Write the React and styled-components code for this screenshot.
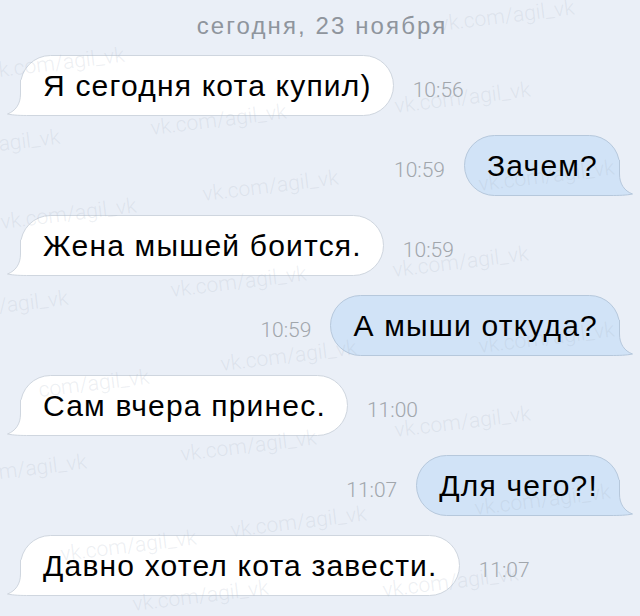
import React from 'react'
import styled, { createGlobalStyle } from 'styled-components'

const GlobalStyle = createGlobalStyle`
  html, body {
    margin: 0;
    padding: 0;
    background: #eaeff7;
  }
  body {
    font-family: "Liberation Sans", Arial, sans-serif;
  }
`

const messages = [
  { out: false, text: 'Я сегодня кота купил)', time: '10:56' },
  { out: true, text: 'Зачем?', time: '10:59' },
  { out: false, text: 'Жена мышей боится.', time: '10:59' },
  { out: true, text: 'А мыши откуда?', time: '10:59' },
  { out: false, text: 'Сам вчера принес.', time: '11:00' },
  { out: true, text: 'Для чего?!', time: '11:07' },
  { out: false, text: 'Давно хотел кота завести.', time: '11:07' },
]

// faint watermark stamps over the screenshot
const marks = [
  [440, 12, 'vk.com/agil_vk'], [0, 58, 'k.com/agil_vk'], [396, 94, 'vk.com/agil_vk'],
  [152, 116, 'vk.com/agil_vk'], [0, 132, 'agil_vk'], [480, 172, 'vk.com/agil_vk'],
  [204, 182, 'vk.com/agil_vk'], [2, 210, 'vk.com/agil_vk'], [394, 258, 'vk.com/agil_vk'],
  [172, 278, 'vk.com/agil_vk'], [0, 294, '/agil_vk'], [480, 334, 'vk.com/agil_vk'],
  [222, 352, 'vk.com/agil_vk'], [40, 378, 'com/agil_vk'], [396, 418, 'vk.com/agil_vk'],
  [182, 442, 'vk.com/agil_vk'], [0, 460, 'm/agil_vk'], [476, 496, 'vk.com/agil_vk'],
  [232, 518, 'vk.com/agil_vk'], [62, 542, 'vk.com/agil_vk'], [384, 578, 'vk.com/agil_vk'],
  [134, 592, 'vk.com/agil_vk'],
]

export default function App() {
  return (
    <Screen>
      <GlobalStyle />
      <DateLabel>сегодня, 23 ноября</DateLabel>
      <List>
        {messages.map((m, i) => (
          <Row key={i} out={m.out}>
            <Bubble out={m.out}>
              <Tail out={m.out} viewBox="0 0 50 36" width="50" height="36">
                <path
                  d="M14.5 0 L14.5 14 C14.5 24 9.5 31 1.5 34 C8 35.3 14 35.5 24 35.5 L50 35.5 L50 0 Z"
                  className="fill"
                />
                <path
                  d="M14.5 0 L14.5 14 C14.5 24 9.5 31 1.5 34 C8 35.3 14 35.5 24 35.5 L50 35.5"
                  className="line"
                />
              </Tail>
              <BubbleText>{m.text}</BubbleText>
            </Bubble>
            <Time>{m.time}</Time>
          </Row>
        ))}
      </List>
      <Marks>
        {marks.map(([x, y, t], i) => (
          <Mark key={i} style={{ left: x, top: y }}>{t}</Mark>
        ))}
      </Marks>
    </Screen>
  )
}

const Screen = styled.div`
  position: relative;
  width: 640px;
  height: 616px;
  overflow: hidden;
  background: #eaeff7;
`

const DateLabel = styled.div`
  height: 55px;
  display: flex;
  align-items: center;
  justify-content: center;
  padding: 0 0 3px 4px;
  box-sizing: border-box;
  font-size: 24px;
  color: #8f959d;
  letter-spacing: 2.1px;
`

const List = styled.div`
  display: flex;
  flex-direction: column;
  gap: 19px;
`

const Row = styled.div`
  display: flex;
  align-items: center;
  flex-direction: ${p => (p.out ? 'row-reverse' : 'row')};
  padding: 0 20px;
  gap: 19px;
`

const Bubble = styled.div`
  position: relative;
  height: 61px;
  box-sizing: border-box;
  display: flex;
  align-items: center;
  padding: 0 21px 0 22px;
  border-radius: 31px;
  border: 1px solid ${p => (p.out ? '#b6c8dc' : '#cfd6df')};
  background: ${p => (p.out ? '#d1e3f7' : '#ffffff')};

  .fill {
    fill: ${p => (p.out ? '#d1e3f7' : '#ffffff')};
  }
  .line {
    fill: none;
    stroke: ${p => (p.out ? '#b6c8dc' : '#cfd6df')};
    stroke-width: 1;
  }
`

const Tail = styled.svg`
  position: absolute;
  bottom: -1px;
  ${p => (p.out ? 'right: -15px; transform: scaleX(-1);' : 'left: -15px;')}
  z-index: 0;
`

const BubbleText = styled.span`
  position: relative;
  z-index: 1;
  font-size: 30px;
  letter-spacing: 1.2px;
  color: #000;
  white-space: nowrap;
  margin-top: 1px;
`

const Time = styled.span`
  font-family: Roboto, "Liberation Sans", sans-serif;
  font-size: 21px;
  font-weight: 300;
  color: #a1a6ac;
  margin-top: 9px;
`

const Marks = styled.div`
  position: absolute;
  inset: 0;
  pointer-events: none;
`

const Mark = styled.span`
  position: absolute;
  font-family: Roboto, "Liberation Sans", sans-serif;
  font-size: 21px;
  font-weight: 300;
  color: rgba(170, 182, 198, 0.22);
  transform: rotate(-7deg);
  transform-origin: left bottom;
  white-space: nowrap;
`
